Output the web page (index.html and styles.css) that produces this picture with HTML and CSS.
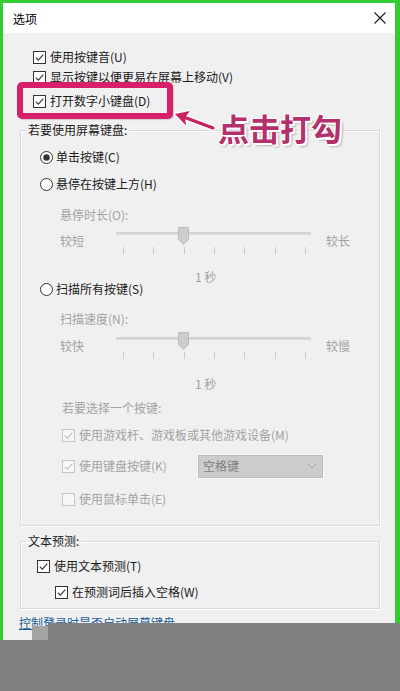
FILE: index.html
```html
<!DOCTYPE html>
<html lang="zh-CN">
<head>
<meta charset="utf-8">
<title>选项</title>
<link rel="stylesheet" href="styles.css">
</head>
<body>
<div class="frame">
  <div class="dialog">
    <div class="titlebar">
      <span class="title">选项</span>
      <svg class="close" viewBox="0 0 12 12" width="12" height="12"><path d="M0.5 0.5 L11.5 11.5 M11.5 0.5 L0.5 11.5" stroke="#1a1a1a" stroke-width="1.1" fill="none"/></svg>
    </div>

    <div class="top-opts">
      <div class="row r1"><svg class="box" viewBox="0 0 13 13"><rect x=".5" y=".5" width="12" height="12" fill="#fff" stroke="#333"/><path d="M2.8 6.6 L5.3 9.2 L10.3 3.6" fill="none" stroke="#333" stroke-width="1.1"/></svg>使用按键音(U)</div>
      <div class="row r2"><svg class="box" viewBox="0 0 13 13"><rect x=".5" y=".5" width="12" height="12" fill="#fff" stroke="#333"/><path d="M2.8 6.6 L5.3 9.2 L10.3 3.6" fill="none" stroke="#333" stroke-width="1.1"/></svg>显示按键以便更易在屏幕上移动(V)</div>
      <div class="row r3"><svg class="box" viewBox="0 0 13 13"><rect x=".5" y=".5" width="12" height="12" fill="#fff" stroke="#333"/><path d="M2.8 6.6 L5.3 9.2 L10.3 3.6" fill="none" stroke="#333" stroke-width="1.1"/></svg>打开数字小键盘(D)</div>
    </div>

    <fieldset class="group g1">
      <legend>若要使用屏幕键盘:</legend>
      <div class="row radio first"><svg class="box" viewBox="0 0 13 13"><circle cx="6.5" cy="6.5" r="6" fill="#fff" stroke="#333"/><circle cx="6.5" cy="6.5" r="3.2" fill="#333"/></svg>单击按键(C)</div>
      <div class="row radio second"><svg class="box" viewBox="0 0 13 13"><circle cx="6.5" cy="6.5" r="6" fill="#fff" stroke="#333"/></svg>悬停在按键上方(H)</div>
      <div class="row sub-label hover-label">悬停时长(O):</div>
      <div class="slider-row s1">
        <span class="s-label">较短</span>
        <div class="slider">
          <div class="track"></div>
          <svg class="thumb" viewBox="0 0 11 18" width="11" height="18"><path d="M0.5 0.5 H10.5 V12.5 L5.5 17.5 L0.5 12.5 Z" fill="#cdcdcd" stroke="#bdbdbd"/></svg>
          <div class="ticks"><i></i><i></i><i></i><i></i><i></i><i></i><i></i></div>
        </div>
        <span class="s-label right">较长</span>
      </div>
      <div class="row seconds sec1">1 秒</div>
      <div class="row radio third"><svg class="box" viewBox="0 0 13 13"><circle cx="6.5" cy="6.5" r="6" fill="#fff" stroke="#333"/></svg>扫描所有按键(S)</div>
      <div class="row sub-label scan-label">扫描速度(N):</div>
      <div class="slider-row s2">
        <span class="s-label">较快</span>
        <div class="slider">
          <div class="track"></div>
          <svg class="thumb" viewBox="0 0 11 18" width="11" height="18"><path d="M0.5 0.5 H10.5 V12.5 L5.5 17.5 L0.5 12.5 Z" fill="#cdcdcd" stroke="#bdbdbd"/></svg>
          <div class="ticks"><i></i><i></i><i></i><i></i><i></i><i></i><i></i></div>
        </div>
        <span class="s-label right">较慢</span>
      </div>
      <div class="row seconds sec2">1 秒</div>
      <div class="row choose-label">若要选择一个按键:</div>
      <div class="row dis chk-m"><svg class="box" viewBox="0 0 13 13"><rect x=".5" y=".5" width="12" height="12" fill="#f7f7f7" stroke="#c6c6c6"/><path d="M2.8 6.6 L5.3 9.2 L10.3 3.6" fill="none" stroke="#c2c2c2" stroke-width="1.1"/></svg>使用游戏杆、游戏板或其他游戏设备(M)</div>
      <div class="row dis chk-k">
        <span class="k-label"><svg class="box" viewBox="0 0 13 13"><rect x=".5" y=".5" width="12" height="12" fill="#f7f7f7" stroke="#c6c6c6"/><path d="M2.8 6.6 L5.3 9.2 L10.3 3.6" fill="none" stroke="#c2c2c2" stroke-width="1.1"/></svg>使用键盘按键(K)</span>
        <span class="dropdown"><span>空格键</span><svg viewBox="0 0 10 6" width="10" height="6"><path d="M0.5 0.5 L5 5 L9.5 0.5" fill="none" stroke="#a8a8a8"/></svg></span>
      </div>
      <div class="row dis chk-e"><svg class="box" viewBox="0 0 13 13"><rect x=".5" y=".5" width="12" height="12" fill="#f7f7f7" stroke="#c6c6c6"/></svg>使用鼠标单击(E)</div>
    </fieldset>

    <fieldset class="group g2">
      <legend>文本预测:</legend>
      <div class="row chk-t"><svg class="box" viewBox="0 0 13 13"><rect x=".5" y=".5" width="12" height="12" fill="#fff" stroke="#333"/><path d="M2.8 6.6 L5.3 9.2 L10.3 3.6" fill="none" stroke="#333" stroke-width="1.1"/></svg>使用文本预测(T)</div>
      <div class="row chk-w"><svg class="box" viewBox="0 0 13 13"><rect x=".5" y=".5" width="12" height="12" fill="#fff" stroke="#333"/><path d="M2.8 6.6 L5.3 9.2 L10.3 3.6" fill="none" stroke="#333" stroke-width="1.1"/></svg>在预测词后插入空格(W)</div>
    </fieldset>

    <div class="row link-row"><a class="link" href="#">控制登录时是否启动屏幕键盘</a></div>
  </div>

  <div class="highlight"></div>
  <svg class="arrow" viewBox="0 0 50 30" width="50" height="30">
    <g fill="#fff" stroke="#fff" stroke-width="2.5" stroke-linejoin="round">
      <path d="M5 9 L20 6 L15 12.5 L16 20.5 Z"/>
      <path d="M15 12.5 L43 23" stroke-width="6" stroke-linecap="round"/>
    </g>
    <g fill="#c8215f">
      <path d="M5 9 L20 6 L15 12.5 L16 20.5 Z"/>
      <path d="M15 12.5 L43 23" stroke="#c8215f" stroke-width="3.2" stroke-linecap="round"/>
    </g>
  </svg>
  <div class="callout">点击打勾</div>

  <div class="cover cover-a"></div>
  <div class="cover cover-b"></div>
  <div class="cover cover-c"></div>
</div>
</body>
</html>
```
FILE: styles.css
```css
html, body {
  margin: 0;
  padding: 0;
}

body {
  font-family: "Noto Sans CJK SC", "Microsoft YaHei", sans-serif;
  font-size: 12px;
  color: #1a1a1a;
}

.frame {
  position: relative;
  width: 400px;
  height: 691px;
  box-sizing: border-box;
  padding: 3px 5px 0 3px;
  background: #33cc33;
  overflow: hidden;
}

.dialog {
  height: 100%;
  background: #f0f0f0;
  display: flex;
  flex-direction: column;
}

.titlebar {
  flex: none;
  height: 30px;
  background: #ffffff;
  display: flex;
  align-items: center;
  justify-content: space-between;
  padding: 0 9px 0 10px;
  color: #000;
}

.close {
  display: block;
}

.row {
  flex: none;
  display: flex;
  align-items: center;
  height: 12px;
  line-height: 12px;
  white-space: nowrap;
}

.box {
  flex: none;
  width: 13px;
  height: 13px;
  margin-right: 4px;
}

.radio .box {
  margin-right: 3px;
}

/* top options */
.top-opts {
  flex: none;
  padding-left: 30px;
}
.r1 { margin-top: 18px; }
.r2 { margin-top: 8px; }
.r3 { margin-top: 12px; }

/* group boxes */
.group {
  flex: none;
  margin: 0 0 0 17px;
  width: 360px;
  min-width: 0;
  box-sizing: border-box;
  padding: 0;
  border: 1px solid #d9d9d9;
  box-shadow: inset 1px 1px 0 #ffffff, 1px 1px 0 #ffffff;
}

.group legend {
  margin-left: 5px;
  padding: 0 2px;
  height: 20px;
  line-height: 20px;
}

.g1 {
  margin-top: 13px;
  padding-bottom: 20px;
}

.g2 {
  margin-top: 5px;
  padding-bottom: 10px;
}

.radio { padding-left: 19px; }
.radio.first { margin-top: 11px; }
.radio.second { margin-top: 15px; }
.radio.third { margin-top: 0; }

.sub-label,
.seconds,
.choose-label,
.s-label,
.dis {
  color: #a3a3a3;
}

.sub-label { padding-left: 39px; }
.hover-label { margin-top: 19px; }
.scan-label { margin-top: 18px; }

.seconds { padding-left: 174px; }
.sec1 { margin-top: 15px; }
.sec2 { margin-top: 17px; }

.choose-label {
  padding-left: 41px;
  margin-top: 12px;
}

/* sliders */
.slider-row {
  display: flex;
  height: 30px;
  padding-left: 39px;
}
.s1 { margin-top: 5px; }
.s2 { margin-top: 6px; }

.s-label {
  width: 24px;
  line-height: 12px;
  margin-top: 9px;
  white-space: nowrap;
}
.s-label.right {
  margin-left: 15px;
}

.slider {
  position: relative;
  width: 195px;
  height: 30px;
  margin-left: 32px;
}

.track {
  margin-top: 6px;
  height: 3px;
  background: #d8d8d8;
  border-top: 1px solid #cfcfcf;
  box-sizing: border-box;
}

.thumb {
  position: absolute;
  left: 62px;
  top: 1px;
}

.ticks {
  display: flex;
  justify-content: space-between;
  padding: 0 5px 0 7px;
  margin-top: 12px;
  height: 7px;
}

.ticks i {
  display: block;
  width: 1px;
  height: 100%;
  background: #c9c9c9;
}

/* disabled checkboxes */
.dis { padding-left: 41px; }
.chk-m { margin-top: 15px; }
.chk-k {
  margin-top: 13px;
  height: 24px;
}
.chk-e { margin-top: 15px; }

.k-label {
  display: flex;
  align-items: center;
  width: 136px;
}

.dropdown {
  display: flex;
  align-items: center;
  justify-content: space-between;
  width: 125px;
  height: 23px;
  box-sizing: border-box;
  padding: 0 5px 0 4px;
  background: #cccccc;
  border: 1px solid #bdbdbd;
  outline: 1px solid #f8f8f8;
  color: #7d7d7d;
}

/* text prediction */
.chk-t {
  margin-top: 9px;
  padding-left: 16px;
}
.chk-w {
  margin-top: 14px;
  padding-left: 34px;
}

.link-row {
  margin-top: 8px;
  padding-left: 16px;
}

.link {
  color: #1b5e93;
  text-decoration: underline;
}

/* annotation overlay */
.highlight {
  position: absolute;
  left: 17px;
  top: 82px;
  width: 156px;
  height: 37px;
  box-sizing: border-box;
  border: 6px solid #d6206a;
  border-radius: 5px;
  box-shadow: 1px 1px 1px rgba(0, 0, 0, 0.15);
}

.arrow {
  position: absolute;
  left: 170px;
  top: 105px;
}

.callout {
  position: absolute;
  left: 218px;
  top: 110px;
  font-size: 31px;
  line-height: 36px;
  font-weight: 700;
  color: #b3306a;
  white-space: nowrap;
  text-shadow:
    1px 0 0 #fff, -1px 0 0 #fff, 0 1px 0 #fff, 0 -1px 0 #fff,
    2px 2px 0 #fff, 3px 3px 2px rgba(0, 0, 0, 0.25);
}

/* grey cover at the bottom */
.cover {
  position: absolute;
  background: #818181;
}
.cover-a {
  left: 48px;
  right: 0;
  top: 623px;
  bottom: 0;
}
.cover-b {
  left: 0;
  right: 0;
  top: 640px;
  bottom: 0;
}
.cover-c {
  left: 32px;
  top: 626px;
  width: 16px;
  height: 14px;
  background: #a3a3a3;
}
```
